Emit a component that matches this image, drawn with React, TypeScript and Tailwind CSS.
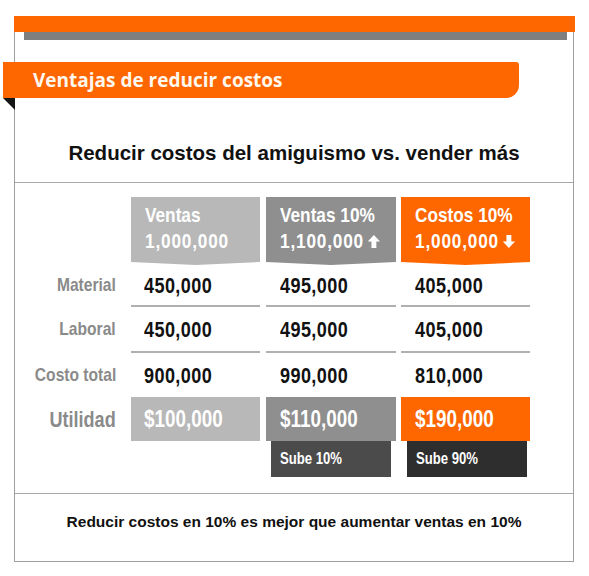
import React from "react";

const sans = { fontFamily: '"Liberation Sans", Arial, sans-serif' };

function N({ children, right, cls }: { children: React.ReactNode; right?: boolean; cls?: string }) {
  return (
    <span className={`inline-flex items-center whitespace-nowrap scale-x-[0.82] ${right ? "origin-right" : "origin-left"} ${cls ?? ""}`}>
      {children}
    </span>
  );
}

function Arrow({ dir }: { dir: "up" | "down" }) {
  return (
    <svg width="15" height="13" viewBox="0 0 15 13" className="inline-block ml-[5px]">
      {dir === "up" ? (
        <polygon points="7.5,0 15,6.5 10.5,6.5 10.5,13 4.5,13 4.5,6.5 0,6.5" fill="#ffffff" />
      ) : (
        <polygon points="7.5,13 15,6.5 10.5,6.5 10.5,0 4.5,0 4.5,6.5 0,6.5" fill="#ffffff" />
      )}
    </svg>
  );
}

const notch = { clipPath: "polygon(0 0, 100% 0, 100% calc(100% - 3px), 50% 100%, 0 calc(100% - 3px))" };

function Header({ bg, l1, l2, arrow, w }: { bg: string; l1: string; l2: string; arrow?: "up" | "down"; w: string }) {
  return (
    <div className={`${bg} ${w} h-[68px] pl-[14px] pt-[5px] text-white text-[21px] font-bold leading-[26px]`} style={notch}>
      <div>
        <N>{l1}</N>
      </div>
      <div>
        <N cls="tracking-[1px]">
          {l2}
          {arrow && <Arrow dir={arrow} />}
        </N>
      </div>
    </div>
  );
}

function Line() {
  return (
    <div className="flex h-[2px]">
      <div className="w-[116px]" />
      <div className="w-[129px] bg-[#b0b0b0]" />
      <div className="w-[130px] ml-[6px] bg-[#b0b0b0]" />
      <div className="w-[129px] ml-[5px] bg-[#b0b0b0]" />
    </div>
  );
}

function Row({ label, vals, h }: { label: string; vals: string[]; h: string }) {
  return (
    <div className={`flex ${h} items-center`}>
      <div className="w-[116px] pr-[15px] text-right text-[19px] font-bold text-[#8a8a8a]">
        <N right>{label}</N>
      </div>
      <div className="w-[129px] pl-[13px] text-[22px] font-bold text-[#111] tracking-[0.5px]">
        <N>{vals[0]}</N>
      </div>
      <div className="w-[130px] ml-[6px] pl-[14px] text-[22px] font-bold text-[#111] tracking-[0.5px]">
        <N>{vals[1]}</N>
      </div>
      <div className="w-[129px] ml-[5px] pl-[14px] text-[22px] font-bold text-[#111] tracking-[0.5px]">
        <N>{vals[2]}</N>
      </div>
    </div>
  );
}

export default function App() {
  return (
    <div className="w-[589px] h-[576px] bg-white overflow-hidden">
      <div className="ml-[14px] pt-4 w-[561px]">
        <div className="h-4 bg-[#fe6600]" />
        <div className="w-[560px] h-[530px] border-l border-r border-b border-[#9f9f9f]">
          <div className="ml-[9px] mr-[6px] h-2 bg-[#7f7f7f]" />
          <div
            className="-ml-[12px] mt-[22px] w-[516px] h-[36px] bg-[#fe6600] rounded-tr-[3px] rounded-br-[13px] pl-[30px] flex items-center text-[19px] font-bold text-[#fff8ee]"
            style={{ fontFamily: '"Open Sans", sans-serif' }}
          >
            Ventajas de reducir costos
          </div>
          <svg width="12" height="12" viewBox="0 0 12 12" className="-ml-[12px] block">
            <polygon points="0,0 12,0 12,12" fill="#151515" />
          </svg>
          <div className="mt-[30px] h-[26px] text-center text-[20.5px] font-bold leading-[26px] text-[#111]" style={sans}>
            Reducir costos del amiguismo vs. vender más
          </div>
          <div className="mt-[16px] h-px bg-[#a8a8a8]" />
          <div className="pt-[14px]" style={sans}>
            <div className="flex">
              <div className="w-[116px]" />
              <Header bg="bg-[#b8b8b8]" w="w-[129px]" l1="Ventas" l2="1,000,000" />
              <div className="ml-[6px]">
                <Header bg="bg-[#8f8f8f]" w="w-[130px]" l1="Ventas 10%" l2="1,100,000" arrow="up" />
              </div>
              <div className="ml-[5px]">
                <Header bg="bg-[#fe6600]" w="w-[129px]" l1="Costos 10%" l2="1,000,000" arrow="down" />
              </div>
            </div>
            <Row label="Material" vals={["450,000", "495,000", "405,000"]} h="h-[40px]" />
            <Line />
            <Row label="Laboral" vals={["450,000", "495,000", "405,000"]} h="h-[44px]" />
            <Line />
            <Row label="Costo total" vals={["900,000", "990,000", "810,000"]} h="h-[44px]" />
            <div className="flex h-[44px]">
              <div className="w-[116px] pr-[15px] flex items-center justify-end text-[22px] font-bold text-[#8a8a8a]">
                <N right>Utilidad</N>
              </div>
              <div className="w-[129px] bg-[#b8b8b8] pl-[13px] flex items-center text-[23px] font-bold text-white">
                <N>$100,000</N>
              </div>
              <div className="w-[130px] ml-[6px] bg-[#8f8f8f] pl-[14px] flex items-center text-[23px] font-bold text-white">
                <N>$110,000</N>
              </div>
              <div className="w-[129px] ml-[5px] bg-[#fe6600] pl-[14px] flex items-center text-[23px] font-bold text-white">
                <N>$190,000</N>
              </div>
            </div>
            <div className="flex h-[36px]">
              <div className="w-[116px]" />
              <div className="w-[129px]" />
              <div className="w-[120px] ml-[11px] bg-[#4b4b4b] pl-[9px] flex items-center text-[16px] font-bold text-white">
                <N>Sube 10%</N>
              </div>
              <div className="w-[120px] ml-[16px] bg-[#2e2e2e] pl-[9px] flex items-center text-[16px] font-bold text-white">
                <N>Sube 90%</N>
              </div>
            </div>
          </div>
          <div className="mt-[16px] h-px bg-[#a8a8a8]" />
          <div className="pt-[18px] text-center text-[15.5px] font-bold leading-[20px] text-[#111]" style={sans}>
            Reducir costos en 10% es mejor que aumentar ventas en 10%
          </div>
        </div>
      </div>
    </div>
  );
}
